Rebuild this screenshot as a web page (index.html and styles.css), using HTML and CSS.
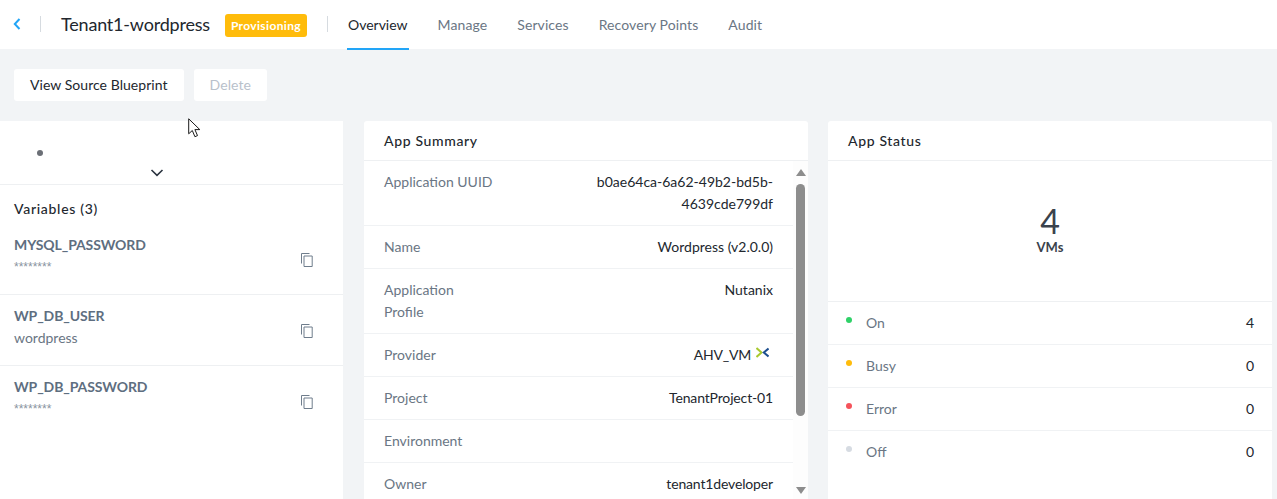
FILE: index.html
```html
<!DOCTYPE html>
<html lang="en">
<head>
<meta charset="utf-8">
<title>Tenant1-wordpress</title>
<link rel="stylesheet" href="styles.css">
</head>
<body>
<header class="topbar">
  <svg class="back" width="8" height="12" viewBox="0 0 8 12"><path d="M6.5 1 1.8 6l4.7 5" fill="none" stroke="#22a5f7" stroke-width="2"/></svg>
  <span class="vsep first"></span>
  <h1 class="title">Tenant1-wordpress</h1>
  <span class="badge">Provisioning</span>
  <span class="vsep second"></span>
  <nav class="tabs">
    <a class="tab active">Overview</a>
    <a class="tab">Manage</a>
    <a class="tab">Services</a>
    <a class="tab">Recovery Points</a>
    <a class="tab">Audit</a>
  </nav>
</header>
<div class="actions">
  <button class="btn">View Source Blueprint</button>
  <button class="btn disabled">Delete</button>
</div>
<main class="columns">
  <section class="side">
    <div class="side-top">
      <span class="dot-grey"></span>
      <svg class="chevron" width="14" height="8" viewBox="0 0 14 8"><path d="M1.5 1 7 6.3 12.5 1" fill="none" stroke="#2b3440" stroke-width="1.6"/></svg>
    </div>
    <h2 class="var-head">Variables (3)</h2>
    <div class="var first-var">
      <div><div class="var-name">MYSQL_PASSWORD</div><div class="var-mask">********</div></div>
      <svg class="copy" width="12" height="14" viewBox="0 0 12 14"><path d="M.5 10.5V.5h8M3 3h8.2v10.5H3z" fill="none" stroke="#6f7d8c"/></svg>
    </div>
    <div class="var">
      <div><div class="var-name">WP_DB_USER</div><div class="var-value">wordpress</div></div>
      <svg class="copy" width="12" height="14" viewBox="0 0 12 14"><path d="M.5 10.5V.5h8M3 3h8.2v10.5H3z" fill="none" stroke="#6f7d8c"/></svg>
    </div>
    <div class="var last-var">
      <div><div class="var-name">WP_DB_PASSWORD</div><div class="var-mask">********</div></div>
      <svg class="copy" width="12" height="14" viewBox="0 0 12 14"><path d="M.5 10.5V.5h8M3 3h8.2v10.5H3z" fill="none" stroke="#6f7d8c"/></svg>
    </div>
  </section>
  <section class="card">
    <h2 class="card-head">App Summary</h2>
    <div class="summary">
      <div class="rows">
        <div class="row tall"><span class="label">Application UUID</span><span class="value">b0ae64ca-6a62-49b2-bd5b-<br>4639cde799df</span></div>
        <div class="row"><span class="label">Name</span><span class="value">Wordpress (v2.0.0)</span></div>
        <div class="row tall"><span class="label">Application<br>Profile</span><span class="value">Nutanix</span></div>
        <div class="row"><span class="label">Provider</span><span class="value provider">AHV_VM
          <svg class="logo" width="13" height="11" viewBox="0 0 13 11"><path d="M.5 1 5.5 5.5.5 10" fill="none" stroke="#a9c92f" stroke-width="2"/><path d="M12.5 1.5 7.8 5.5l4.7 4" fill="none" stroke="#1d4f8f" stroke-width="2"/></svg></span></div>
        <div class="row"><span class="label">Project</span><span class="value tight">TenantProject-01</span></div>
        <div class="row"><span class="label">Environment</span><span class="value"></span></div>
        <div class="row"><span class="label">Owner</span><span class="value tight">tenant1developer</span></div>
      </div>
      <div class="scrollbar">
        <span class="arrow up"></span>
        <span class="thumb"></span>
        <span class="arrow down"></span>
      </div>
    </div>
  </section>
  <section class="card">
    <h2 class="card-head">App Status</h2>
    <div class="vm-total"><span class="vm-num">4</span><span class="vm-label">VMs</span></div>
    <div class="status"><span class="sdot on"></span><span class="sname">On</span><span class="scount">4</span></div>
    <div class="status"><span class="sdot busy"></span><span class="sname">Busy</span><span class="scount">0</span></div>
    <div class="status"><span class="sdot error"></span><span class="sname">Error</span><span class="scount">0</span></div>
    <div class="status"><span class="sdot off"></span><span class="sname">Off</span><span class="scount">0</span></div>
  </section>
</main>
<svg class="cursor" width="14" height="20" viewBox="0 0 14 20"><path d="M.7.8v15l3.6-3.3 2.6 6.2 2.6-1.1-2.6-6h4.9z" fill="#fff" stroke="#1a1a1a"/></svg>
</body>
</html>
```
FILE: styles.css
```css
* { box-sizing: border-box; }
html, body { margin: 0; height: 499px; overflow: hidden; }
body {
  background: #f2f4f6;
  font-family: "Lato", "Liberation Sans", sans-serif;
  font-size: 14px;
  color: #22272e;
  position: relative;
}
.topbar {
  height: 49px;
  background: #fff;
  display: flex;
  align-items: center;
}
.back { margin-left: 13px; margin-top: -1px; }
.vsep { width: 1px; height: 16px; background: #d6dbe0; }
.vsep.first { margin-left: 19px; margin-top: -1px; }
.vsep.second { margin-left: 20px; margin-top: -1px; }
.title {
  margin: -1px 0 0 20px;
  font-size: 18px;
  font-weight: 400;
  color: #22272e;
  letter-spacing: -.2px;
}
.badge {
  margin-left: 15px;
  margin-top: 1px;
  background: #ffbc0b;
  color: #fff;
  font-size: 12px;
  font-weight: 700;
  height: 23px;
  line-height: 23px;
  padding: 0 6px;
  border-radius: 3px;
  letter-spacing: .35px;
}
.tabs { display: flex; margin-left: 19px; gap: 28px; height: 49px; }
.tab {
  display: block;
  padding: 0 1px;
  line-height: 50px;
  color: #6a7684;
  letter-spacing: .1px;
}
.tab.active { color: #22272e; border-bottom: 2px solid #22a5f7; height: 50px; letter-spacing: 0; }
.actions { display: flex; gap: 10px; padding: 20px 14px; height: 72px; }
.btn {
  height: 32px;
  border: 0;
  border-radius: 3px;
  background: #fff;
  font: inherit;
  color: #22272e;
  padding: 0 16px 2px;
  letter-spacing: .05px;
}
.btn.disabled { color: #b9c1cb; }
.columns {
  display: grid;
  grid-template-columns: 344px 444px 444px;
  column-gap: 20px;
  height: 378px;
}
.side, .card { background: #fff; overflow: hidden; }
.side { margin-right: 1px; }
.card { border-radius: 3px 3px 0 0; }
.side-top {
  height: 64px;
  border-bottom: 1px solid #eef0f2;
  display: flex;
  flex-direction: column;
  align-items: flex-start;
}
.dot-grey {
  width: 6px;
  height: 6px;
  border-radius: 50%;
  background: #6b6f76;
  margin: 29px 0 0 37px;
}
.chevron { margin: 13px 0 0 150px; }
.var-head {
  margin: 0;
  padding: 15px 14px 0;
  font-size: 14px;
  font-weight: 500;
  line-height: 17px;
  color: #22272e;
  letter-spacing: .7px;
}
.var {
  height: 71px;
  padding: 12px 30px 0 14px;
  border-bottom: 1px solid #eef0f2;
  display: flex;
  justify-content: space-between;
  align-items: flex-start;
}
.first-var { height: 78px; padding-top: 19px; }
.last-var { border-bottom: 0; }
.var-name { font-weight: 700; color: #5e6e80; line-height: 18px; letter-spacing: -.1px; }
.var-mask { font-family: "Liberation Sans", sans-serif; font-size: 12px; color: #8a94a0; line-height: 18px; margin-top: 4px; }
.var-value { color: #6a7684; line-height: 20px; margin-top: 3px; }
.copy { margin-top: 17px; }
.card-head {
  margin: 0;
  height: 40px;
  padding: 0 20px;
  border-bottom: 1px solid #eef0f2;
  font-size: 14px;
  font-weight: 500;
  line-height: 39px;
  color: #22272e;
  letter-spacing: .65px;
}
.summary { display: flex; height: 338px; overflow: hidden; }
.rows { width: 429px; flex: none; }
.row {
  display: flex;
  justify-content: space-between;
  padding: 10px 20px 0;
  height: 43px;
  border-bottom: 1px solid #f0f2f4;
  line-height: 22px;
}
.row.tall { height: 65px; }
.label { color: #6a7684; }
.value { text-align: right; color: #22272e; }
.value.tight { letter-spacing: -.15px; }
.provider { padding-right: 4px; display: flex; align-items: flex-start; gap: 5px; letter-spacing: -.2px; }
.logo { margin-top: 3px; }
.scrollbar {
  width: 15px;
  background: #fdfdfd;
  display: flex;
  flex-direction: column;
  align-items: center;
}
.thumb {
  width: 9px;
  height: 232px;
  border-radius: 5px;
  background: #8d8d8d;
  margin-top: 8px;
}
.arrow { width: 0; height: 0; border-left: 5px solid transparent; border-right: 5px solid transparent; }
.arrow.up { border-bottom: 7px solid #8d8d8d; margin-top: 8px; }
.arrow.down { border-top: 7px solid #8d8d8d; margin-top: 71px; }
.vm-total {
  height: 141px;
  display: flex;
  flex-direction: column;
  align-items: center;
  padding-top: 41px;
  border-bottom: 1px solid #eef0f2;
}
.vm-num { font-size: 34px; line-height: 38px; color: #3a424c; }
.vm-label { font-size: 13px; font-weight: 700; line-height: 16px; color: #3a424c; margin-top: -1px; }
.status {
  height: 43px;
  padding: 0 18px 2px;
  display: flex;
  align-items: center;
  border-bottom: 1px solid #f0f2f4;
}
.status:last-child { border-bottom: 0; }
.sdot { width: 6px; height: 6px; border-radius: 50%; margin-top: -5px; }
.sdot.on { background: #2fd168; }
.sdot.busy { background: #ffbc0b; }
.sdot.error { background: #f5535b; }
.sdot.off { background: #d6dbe2; }
.sname { margin-left: 14px; color: #6a7684; flex: 1; }
.scount { color: #22272e; }
.cursor { position: absolute; left: 188px; top: 118px; }
```
